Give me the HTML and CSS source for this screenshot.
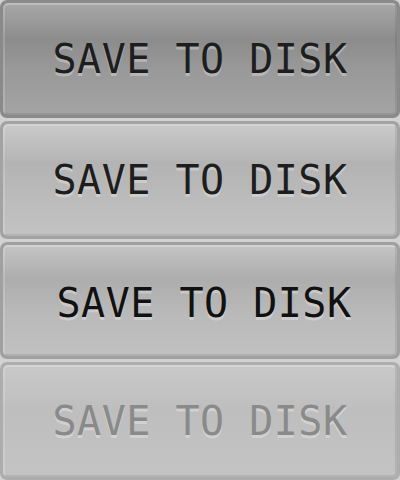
FILE: index.html
```html
<!DOCTYPE html>
<html lang="en">
<head>
  <meta charset="UTF-8">
  <title>Save buttons</title>
  <link rel="stylesheet" href="styles.css">
</head>
<body>
  <div class="stack">
    <div class="btn btn-hover"><span class="face">SAVE TO DISK</span></div>
    <div class="btn btn-normal"><span class="face">SAVE TO DISK</span></div>
    <div class="btn btn-pressed"><span class="face">SAVE TO DISK</span></div>
    <div class="btn btn-disabled"><span class="face">SAVE TO DISK</span></div>
  </div>
</body>
</html>
```

FILE: styles.css
```css
/* Button sprite sheet: four states */
body {
  margin: 0;
  background-color: #d2d2d2;
  font-family: "DejaVu Sans Mono", monospace;
}

.stack {
  width: 400px;
  display: flex;
  flex-direction: column;
  gap: 3px;
}

.btn {
  height: 117.75px;
  box-sizing: border-box;
  padding: 3px;
  border-radius: 7px;
  background-color: #8f8f8f;
  display: flex;
}

.face {
  flex: 1;
  display: flex;
  align-items: center;
  justify-content: center;
  border-radius: 5px;
  border-top: 2px solid rgba(255, 255, 255, 0.3);
  border-left: 2px solid rgba(255, 255, 255, 0.18);
  border-bottom: 2px solid rgba(0, 0, 0, 0.1);
  border-right: 2px solid rgba(0, 0, 0, 0.08);
  font-size: 40px;
  letter-spacing: 0.5px;
  color: #1e1e1e;
  text-shadow: 0 3px 0 rgba(255, 255, 255, 0.3);
}

/* hover */
.btn-hover {
  background-color: #8a8a8a;
}

.btn-hover .face {
  background: linear-gradient(#a6a6a6 0%, #8c8c8c 32%, #999999 60%, #a3a3a3 100%);
}

/* normal */
.btn-normal {
  background-color: #a3a3a3;
}

.btn-normal .face {
  background: linear-gradient(#c9c9c9 0%, #b3b3b3 35%, #bcbcbc 70%, #c2c2c2 100%);
}

/* pressed */
.btn-pressed {
  background-color: #a0a0a0;
}

.btn-pressed .face {
  background: linear-gradient(#c3c3c3 0%, #adadad 30%, #bababa 65%, #c0c0c0 100%);
  padding: 6px 0 0 8px;
  color: #111111;
}

/* disabled */
.btn-disabled {
  background-color: #adadad;
}

.btn-disabled .face {
  background: linear-gradient(#c8c8c8 0%, #bebebe 40%, #c3c3c3 100%);
  color: #8a8a8a;
  text-shadow: 0 3px 0 rgba(255, 255, 255, 0.3);
}
```
